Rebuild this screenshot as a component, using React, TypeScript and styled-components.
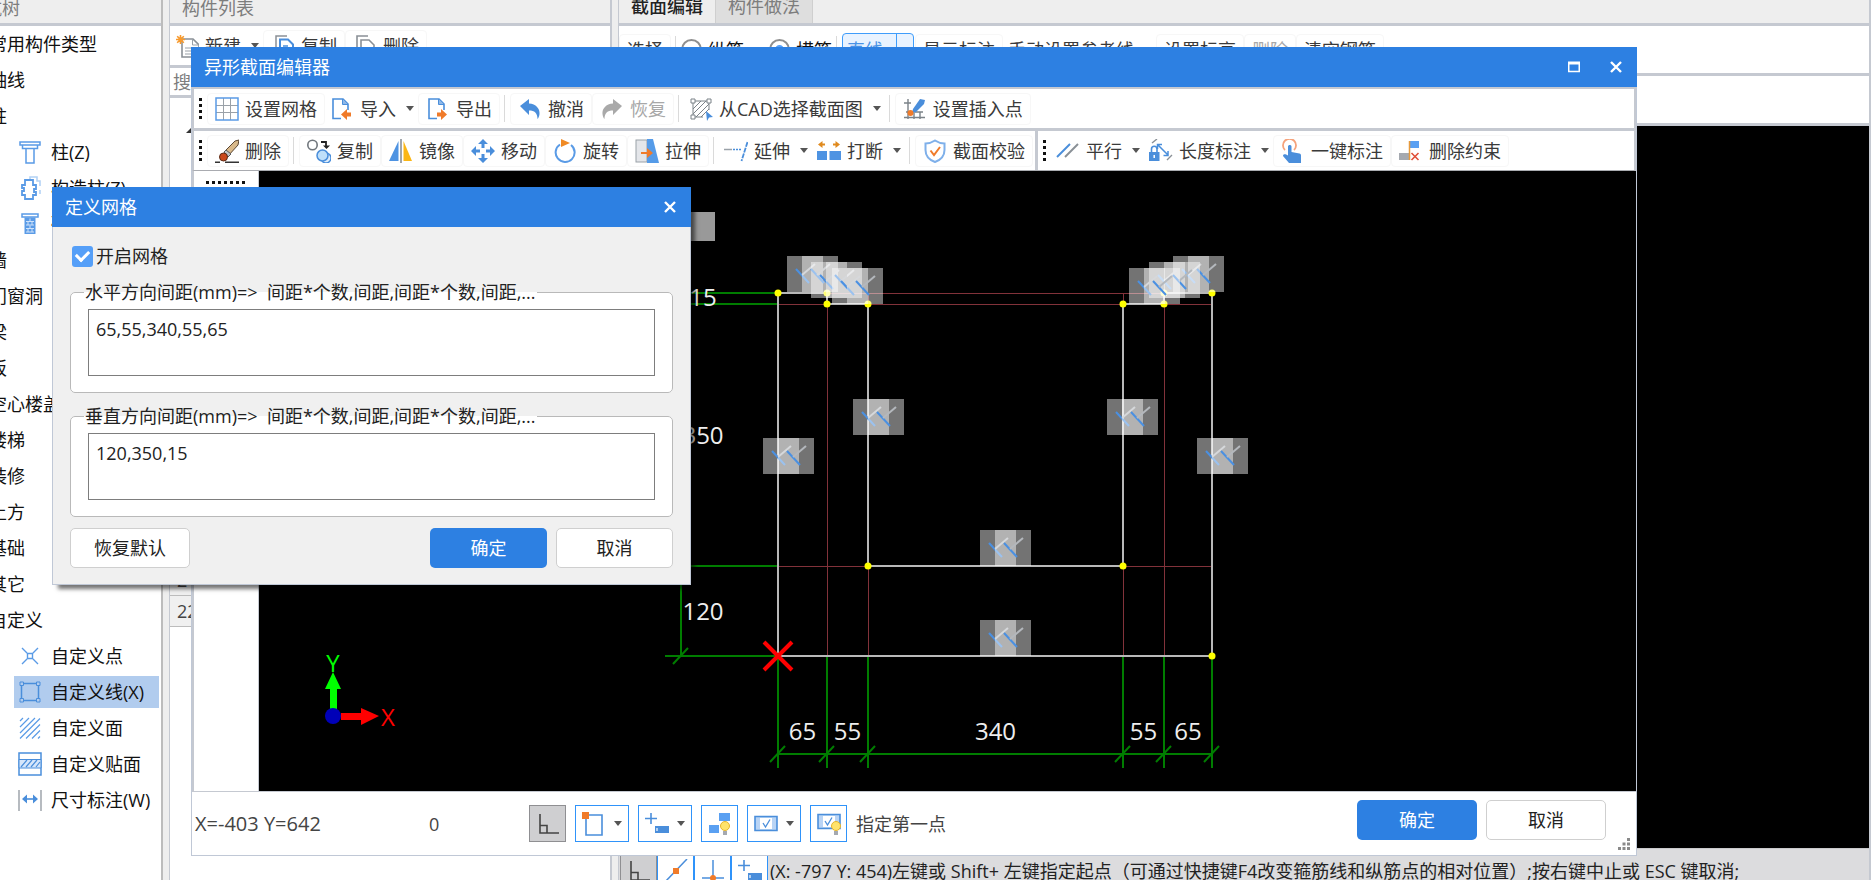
import React from "react";
import styled, { createGlobalStyle, css } from "styled-components";

const GlobalStyle = createGlobalStyle`
  * { box-sizing: border-box; }
  body { margin: 0; }
  body, button, input, textarea {
    font-family: "Open Sans", "Noto Sans CJK SC", sans-serif;
    font-size: 18px;
    line-height: 24px;
    color: #333;
  }
`;

const LINE = "#c5c9d1";
const BLUE = "#2d80e2";

/* ---------- main window ---------- */

const Workspace = styled.div`
  position: relative;
  display: flex;
  gap: 6px;
  height: 100vh;
  overflow: hidden;
  background: #eeeeee;
`;

const Pane = styled.section<{ $width?: number }>`
  display: flex;
  flex-direction: column;
  flex: ${(p) => (p.$width ? `0 0 ${p.$width}px` : "1 1 0")};
  min-width: 0;
  background: #fff;
  border-left: 1px solid ${LINE};
  border-right: 2px solid ${LINE};
`;

const NavPane = styled(Pane)`
  border-left: 0;
  border-right-color: #bcbcbc;
`;

const PaneHeader = styled.header`
  display: flex;
  flex: 0 0 26px;
  background: #eeeeee;
  border-bottom: 3px solid ${LINE};
  overflow: hidden;
`;

const PaneTitle = styled.h2`
  margin: -4px 0 0 12px;
  font-size: 18px;
  font-weight: 400;
  line-height: 24px;
  color: #7d7d7d;
  white-space: nowrap;
`;

const NavTitle = styled(PaneTitle)`
  margin-left: -34px;
`;

const NavList = styled.ul`
  display: flex;
  flex-direction: column;
  list-style: none;
  margin: 0 2px 0 -11px;
  padding: 0;
`;

const NavGroup = styled.li`
  height: 36px;
  line-height: 36px;
  white-space: nowrap;
  color: #111;
`;

const NavItem = styled.li<{ $selected?: boolean }>`
  display: flex;
  align-items: center;
  gap: 9px;
  height: 32px;
  margin: 2px 0 2px 25px;
  padding-left: 4px;
  white-space: nowrap;
  color: #111;
  background: ${(p) => (p.$selected ? "#b1ccee" : "transparent")};
`;

const PaneTools = styled.div<{ $height: number }>`
  display: flex;
  align-items: center;
  flex: 0 0 ${(p) => p.$height}px;
  border-bottom: 3px solid ${LINE};
  overflow: hidden;
`;

const SearchBox = styled.input`
  flex: 0 0 30px;
  padding: 0 3px;
  border: 0;
  border-bottom: 3px solid ${LINE};
  outline: 0;
  &::placeholder { color: #7d7d7d; opacity: 1; }
`;

const ComponentTree = styled.div`
  flex: 0 0 467px;
  padding: 16px;
`;

const RowNumber = styled.div`
  flex: 0 0 31px;
  width: 60px;
  padding-left: 7px;
  line-height: 30px;
  background: #f0f0f0;
  border-bottom: 1px solid #bcbcbc;
  border-right: 1px solid #bcbcbc;
  color: #444;
`;

const Tab = styled.button<{ $active?: boolean }>`
  height: 36px;
  margin-top: -13px;
  padding: 2px 12px 0;
  border: 0;
  border-right: 1px solid #cfcfcf;
  background: ${(p) => (p.$active ? "#eeeeee" : "#dedede")};
  color: ${(p) => (p.$active ? "#222" : "#7d7d7d")};
  font-weight: ${(p) => (p.$active ? 500 : 400)};
`;

const RadioLabel = styled.label`
  display: flex;
  align-items: center;
  gap: 6px;
  color: #111;
  & + & { margin-left: 25px; }
`;

const Radio = styled.input.attrs({ type: "radio" })`
  appearance: none;
  width: 21px;
  height: 21px;
  margin: 0;
  border: 2px solid #8f8f8f;
  border-radius: 50%;
  background: #fff;
  &:checked { background: radial-gradient(circle, #559ff8 4px, #fff 5px); }
`;

const LineMode = styled.button`
  display: flex;
  height: 34px;
  width: 72px;
  padding: 0 0 0 4px;
  margin-right: 1px;
  align-items: center;
  gap: 13px;
  border: 1px solid #3f9dfb;
  border-radius: 4px;
  background: #e9f3ff;
  color: #4b93e6;
  white-space: nowrap;
  &::after { content: ""; width: 1px; height: 32px; background: #3f9dfb; }
`;

const BackViewport = styled.div`
  flex: 1;
  min-height: 0;
  background: #000;
`;

const StatusBar = styled.footer`
  display: flex;
  align-items: center;
  flex: 0 0 45px;
  margin-bottom: -13px;
  padding-left: 1px;
  background: #dcdcde;
  border-top: 1px solid #c9c9cb;
  white-space: nowrap;
  color: #222;
`;

const StatusText = styled.span`
  padding-left: 2px;
`;

/* ---------- toolbars ---------- */

const ToolButton = styled.button<{ $split?: boolean }>`
  display: flex;
  align-items: center;
  gap: 6px;
  height: 32px;
  padding: ${(p) => (p.$split ? "0 3px 0 4px" : "0 7px")};
  border: 1px solid ${(p) => (p.$split ? "transparent" : "#f7f7f7")};
  border-radius: 4px;
  background: #fff;
  white-space: nowrap;
  color: #3a3a3a;
  &:disabled { color: #a8a8a8; }
`;

const Caret = styled.span`
  margin-left: 4px;
  border: 4px solid transparent;
  border-top: 5px solid #555;
  border-bottom: 0;
`;

const ToolDivider = styled.span`
  flex: 0 0 1px;
  height: 27px;
  margin: 0 5px 0 4px;
  background: #dadada;
`;

const Grip = styled.span<{ $across?: boolean }>`
  ${(p) =>
    p.$across
      ? css`width: 40px; height: 3px; margin: 10px 0 0 12px;
          background: repeating-linear-gradient(90deg, #111 0 3px, transparent 3px 6px);`
      : css`width: 3px; height: 21px; margin-right: 5px;
          background: repeating-linear-gradient(#111 0 3px, transparent 3px 6px);`}
`;

/* ---------- dialogs ---------- */

const EditorDialog = styled.section`
  position: absolute;
  inset: 47px 234px 24px 191px;
  display: flex;
  flex-direction: column;
`;

const GridDialog = styled.section`
  position: absolute;
  top: 187px;
  left: 52px;
  width: 639px;
  box-shadow: 5px 5px 4px -1px rgba(0, 0, 0, 0.55);
`;

const TitleBar = styled.header`
  display: flex;
  align-items: center;
  flex: 0 0 40px;
  height: 40px;
  padding-left: 13px;
  background: ${BLUE};
`;

const TitleText = styled.h1`
  flex: 1;
  margin: 0;
  font-size: 18px;
  font-weight: 400;
  line-height: 24px;
  color: #fff;
`;

const WindowButton = styled.button`
  display: grid;
  place-items: center;
  width: 42px;
  height: 40px;
  padding: 0;
  border: 0;
  background: transparent;
`;

const EditorBody = styled.div`
  display: flex;
  flex-direction: column;
  flex: 1;
  min-height: 0;
  background: #fff;
  border: 1px solid #c0c8d6;
  border-top: 2px solid ${LINE};
`;

const ToolRow = styled.div<{ $last?: boolean }>`
  display: flex;
  align-items: center;
  flex: 0 0 ${(p) => (p.$last ? 40 : 42)}px;
  border: 2px solid ${LINE};
  border-top: 0;
  border-bottom: ${(p) => (p.$last ? "1px solid #a9abb0" : `3px solid ${LINE}`)};
`;

const ToolGroup = styled.div<{ $joined?: boolean }>`
  display: flex;
  align-items: center;
  height: 100%;
  padding-left: 5px;
  ${(p) => p.$joined && css`margin-left: 2px; border-left: 3px solid ${LINE};`}
`;

const EditorMain = styled.div`
  display: flex;
  flex: 1;
  min-height: 0;
  border-bottom: 1px solid ${LINE};
`;

const SideStrip = styled.div`
  display: flex;
  flex: 0 0 67px;
  border-left: 2px solid ${LINE};
  border-right: 1px solid ${LINE};
`;

const Drawing = styled.svg`
  flex: 1;
  min-width: 0;
  height: 100%;
  background: #000;
`;

const EditorFooter = styled.footer`
  display: flex;
  align-items: center;
  flex: 0 0 63px;
  padding-left: 3px;
  color: #444;
`;

const Coordinates = styled.span`
  width: 234px;
  font-size: 20px;
`;

const Angle = styled.span`
  width: 100px;
`;

const SnapTools = styled.div`
  display: flex;
  align-items: center;
  gap: 9px;
  flex: 1;
`;

const SnapButton = styled.button<{ $wide?: boolean; $pressed?: boolean }>`
  display: flex;
  align-items: center;
  justify-content: center;
  gap: 4px;
  width: ${(p) => (p.$wide ? 54 : 37)}px;
  height: 37px;
  padding: 0;
  border: 1px solid ${(p) => (p.$pressed ? "#8f8f92" : "#2f93fa")};
  background: ${(p) => (p.$pressed ? "#cfcfd1" : "#fff")};
`;

const PushButton = styled.button<{ $primary?: boolean }>`
  width: 120px;
  height: 40px;
  padding: 0;
  border: ${(p) => (p.$primary ? "0" : "1px solid #cfcfcf")};
  border-radius: 5px;
  background: ${(p) => (p.$primary ? BLUE : "#fff")};
  color: ${(p) => (p.$primary ? "#fff" : "#222")};
`;

const DialogActions = styled.div`
  display: flex;
  align-items: center;
  gap: 9px;
  padding: 0 12px 8px 0;
`;

const SizeGrip = styled.svg`
  align-self: flex-end;
  margin: 0 6px 5px 0;
`;

const GridBody = styled.form`
  display: flex;
  flex-direction: column;
  gap: 11px;
  padding: 16px 17px;
  background: #f0f0f0;
  border: 1px solid #c0c8d6;
  border-top: 0;
`;

const CheckLabel = styled.label`
  display: flex;
  align-items: center;
  gap: 3px;
  height: 26px;
  color: #222;
`;

const CheckBox = styled.input.attrs({ type: "checkbox" })`
  appearance: none;
  display: grid;
  place-items: center;
  width: 21px;
  height: 21px;
  margin: 0 0 0 2px;
  border-radius: 3px;
  background: #559ff8;
  &::after {
    content: "";
    width: 6px;
    height: 10px;
    margin-bottom: 3px;
    border: solid #fff;
    border-width: 0 3px 3px 0;
    transform: rotate(45deg);
  }
`;

const SpacingGroup = styled.fieldset`
  min-width: 0;
  margin: 0;
  padding: 5px 17px 16px;
  border: 1px solid #b9b9b9;
  border-radius: 5px;
  background: #fff;
`;

const SpacingLegend = styled.legend`
  margin-left: -4px;
  padding: 0 1px;
  line-height: 24px;
  white-space: pre;
  color: #222;
`;

const SpacingInput = styled.textarea`
  display: block;
  width: 100%;
  height: 67px;
  padding: 7px;
  border: 1px solid #7d7d7d;
  outline: 0;
  resize: none;
  color: #222;
`;

const ActionRow = styled.div`
  display: flex;
  gap: 9px;
  & > :first-child { margin-right: auto; }
  & > :not(:first-child) { width: 117px; }
`;

/* ---------- icons ---------- */

const C = "#4a8edb";
const G = "#9aa1a8";
const O = "#f07b2a";

const art: Record<string, React.ReactNode> = {
  grid: (
    <>
      <path d="M8.5 1v22M15.5 1v22M1 8.5h22M1 15.5h22" stroke={G} />
      <rect x="1" y="1" width="22" height="22" stroke="#5a9be6" strokeWidth="1.500" />
    </>
  ),
  importFile: (
    <>
      <path d="M11 21.5H3V2h10l5 5v6" stroke={C} strokeWidth="1.6" />
      <path d="M12.500 2v5.500H18" fill="#8fb8e8" stroke={C} />
      <path d="M11 17.500l6-5.500v3.500h4v4h-4V23z" fill={O} />
    </>
  ),
  exportFile: (
    <>
      <path d="M11 21.500H3V2h10l5 5v6" stroke={C} strokeWidth="1.6" />
      <path d="M12.500 2v5.500H18" fill="#8fb8e8" stroke={C} />
      <path d="M21 17.500l-6-5.500v3.500h-4v4h4V23z" fill={O} />
    </>
  ),
  undo: <path d="M2 9l9-7v4.500c7 .5 11 5 10.500 10.500-.3 2.500-1 4-2 5 0-6-3-8.500-8.500-8.500V18z" fill={C} />,
  redo: <path d="M22 9l-9-7v4.500C6 7 2 11.500 2.500 17c.3 2.500 1 4 2 5 0-6 3-8.500 8.500-8.500V18z" fill="#a9a9a9" />,
  cad: (
    <>
      <path d="M4 12l8-8M4 17L17 4M7 20L20 7M12 20l8-8M4 4h16v9M4 4v16h10" stroke="#7b8288" />
      <path d="M2 2h4v4H2zM18 2h4v4h-4zM2 18h4v4H2z" fill="#fff" stroke="#7b8288" />
      <path d="M17 14l7 6-4 .5L18 24z" fill={C} />
    </>
  ),
  insertPoint: (
    <>
      <path d="M5 2v20M11 14v8M17 15v7M1 6h7M1 20.500h21M12 15h8M3 15h4" stroke="#7b8288" strokeWidth="1.400" />
      <path d="M17 2l5 1-1 4-8 8-4 1 1-4z" fill={C} />
      <circle cx="7.500" cy="16" r="3" fill={O} />
    </>
  ),
  eraser: (
    <>
      <path d="M9 13L20 2l4-1-1 5-10 11z" fill="#d9b98a" stroke="#5b4632" />
      <path d="M9 13l2-2 5 4-3 3z" fill="#bfc3c7" stroke="#5b5b5b" />
      <circle cx="8.500" cy="18" r="4" fill="#c9481c" stroke="#5b2b16" />
      <path d="M0 23.300h5M10 23.300h14" stroke="#333" strokeWidth="1.400" />
    </>
  ),
  copyShape: (
    <>
      <circle cx="5.500" cy="6" r="4.700" fill="#fff" stroke="#70767c" strokeWidth="1.600" />
      <path d="M14 3h5v4" stroke="#222" strokeWidth="1.800" />
      <path d="M16 6.500h7L19.500 10z" fill="#222" />
      <circle cx="19" cy="19" r="5" fill="#dcecfb" stroke={C} strokeWidth="1.500" />
      <circle cx="15.500" cy="16.500" r="5.500" fill="#bfe0fa" stroke={C} strokeWidth="1.500" />
    </>
  ),
  mirror: (
    <>
      <path d="M9.500 2v20H0z" fill="#4e93e2" />
      <path d="M14.500 2v20H23z" fill="#fbb615" />
      <path d="M12 0v24" stroke="#8a9096" strokeWidth="1.600" />
    </>
  ),
  move: (
    <path
      d="M12 0l5 5h-3.500v4h-3V5H7zM12 24l-5-5h3.500v-4h3v4H17zM0 12l5-5v3.500h4v3H5V17zM24 12l-5 5v-3.500h-4v-3h4V7z"
      fill={C}
    />
  ),
  rotate: (
    <>
      <path d="M7 5.500a9.500 9.500 0 1 0 11 .5" stroke="#5a9be6" strokeWidth="2" />
      <path d="M8 0l9 4-9 4z" fill="#f08a24" />
    </>
  ),
  stretch: (
    <>
      <rect x="1" y="1" width="11" height="22" fill="#e4e6ea" stroke={G} />
      <path d="M12 0h6l6 24H12z" fill="#559be8" />
      <path d="M6 14h8" stroke={O} strokeWidth="2" />
      <path d="M12 9l6 5-6 5z" fill={O} />
    </>
  ),
  extend: (
    <>
      <path d="M0 10.500h8" stroke={G} strokeWidth="1.500" />
      <path d="M9 10.500h9" stroke={C} strokeWidth="1.500" strokeDasharray="2 1" />
      <path d="M23.500 3l-6 19" stroke={C} strokeWidth="1.800" strokeDasharray="5 1" />
    </>
  ),
  breakLine: (
    <>
      <path d="M0 12h10v9H0zM12.500 12H24v9H12.500z" fill="#4e93e2" />
      <path d="M1 5.500L5.500 2v2.500H8v2H5.500V9zM23 5.500L18.500 2v2.500H16v2h2.500V9z" fill="#e08a1e" />
    </>
  ),
  shield: (
    <>
      <path d="M12 1.500c3 2 6 3 9.500 3V11c0 6-4 10-9.500 12C6.500 21 2.500 17 2.500 11V4.500c3.500 0 6.500-1 9.500-3z" stroke="#7fb0ea" strokeWidth="2" />
      <path d="M7.500 11.500l3.500 4.500 6-8" stroke={O} strokeWidth="2" />
    </>
  ),
  parallel: (
    <>
      <path d="M1 18L14 5" stroke={C} strokeWidth="2" />
      <path d="M9 18L22 5" stroke="#8a9096" strokeWidth="2" />
    </>
  ),
  lengthDim: (
    <>
      <rect x="0" y="13" width="10.500" height="9" fill={C} />
      <path d="M5.200 16v3" stroke="#fff" strokeWidth="1.500" />
      <path d="M2.500 13v-3a2.700 2.700 0 0 1 5.500 0v3" stroke={C} strokeWidth="1.600" />
      <path d="M3 4l5-4M18 21l5-5" stroke="#8a9096" strokeWidth="1.400" />
      <path d="M9 6l10 10M8.500 10V5.500H13M19 12v4.500h-4.500" stroke={C} strokeWidth="1.500" />
    </>
  ),
  tap: (
    <>
      <path d="M4 11a6.500 6.500 0 1 1 9 0" stroke="#f5a37c" strokeWidth="1.800" />
      <path d="M7 7.500c0-2 3.500-2 3.500 0V13l8 1.500c1 .3 1.500 1 1.500 2V24H8l-6-7c0-2 2-2.500 5-.5z" fill={C} />
    </>
  ),
  removeConstraint: (
    <>
      <path d="M0 14h10v7H0z" fill="#a5a9b0" />
      <path d="M11 2h9v7h-9z" fill="#5aa0f2" />
      <path d="M10.500 2v19" stroke="#e79a3c" strokeWidth="1.500" />
      <path d="M12.500 14l7 7M19.500 14l-7 7" stroke="#e05038" strokeWidth="1.600" />
    </>
  ),
  newFile: (
    <>
      <path d="M7 5h11l6 6v12H7z" fill="#fff" stroke="#8a9096" strokeWidth="1.600" />
      <path d="M17.500 5v6H24M10 14h10M10 17h10M10 20h10" stroke={G} />
      <path d="M5.500 1v9M1 5.500h9M2.200 2.200l6.600 6.600M8.800 2.200L2.200 8.800" stroke="#f79a2e" strokeWidth="1.600" />
    </>
  ),
  copyFile: (
    <>
      <path d="M5 20V2h11" stroke="#8a9096" strokeWidth="1.500" />
      <path d="M9 5.500h8l5 5V23H9z" fill="#fff" stroke={C} strokeWidth="2" />
      <path d="M12 12h5M12 15h7" stroke={C} strokeWidth="1.600" />
    </>
  ),
  removeFile: (
    <>
      <path d="M4 20V2h11M8 22V6h8l5 5v3" stroke="#8a9096" strokeWidth="1.600" />
      <path d="M13 13h10v3H13z" fill="#e05048" />
    </>
  ),
  column: (
    <path d="M2 2h20v3H2zM4.500 5v3.500h15V5M8 8.500V23h8V8.500" fill="#fff" stroke="#5a9be6" strokeWidth="1.500" />
  ),
  structColumn: (
    <>
      <path d="M12 4V1h7v4h3v5M22 14v4" stroke="#b3d2f5" strokeWidth="1.600" />
      <path d="M7 4h8v5h3v4h-2v3h2v3h-3v4H7v-4H4v-4h2v-3H4V9h3z" fill="#fff" stroke="#5a9be6" strokeWidth="1.800" />
    </>
  ),
  brickColumn: (
    <>
      <path d="M4 2h16v3H4z" fill="#fff" stroke="#5a9be6" strokeWidth="1.500" />
      <path d="M6.500 5.500h11V22h-11z" fill="#5a9be6" />
      <path d="M8 9.500h8M8 13h8M8 16.500h8M8 20h8M12 6.500v3M10 10v3M14 10v3M12 13.500v3M10 17v3M14 17v3" stroke="#cfe2fa" />
    </>
  ),
  customPoint: (
    <path d="M4 4l5 5M20 4l-5 5M4 20l5-5M20 20l-5-5M9.500 9.500h5v5h-5z" stroke="#5a9be6" strokeWidth="1.400" />
  ),
  customLine: (
    <>
      <path d="M3.500 3.500h17v17h-17z" stroke={C} strokeWidth="1.500" />
      <path d="M2 2h3.500v3.500H2zM18.500 2H22v3.500h-3.500zM2 18.500h3.500V22H2zM18.500 18.500H22V22h-3.500z" fill="#b1ccee" stroke={C} />
    </>
  ),
  customFace: (
    <path d="M2 5l3-3M2 11l9-9M2 17L17 2M2 22.500L22 2.500M8 22.500L22 8.500M14 22.500l8-8M20 22.500l2-2" stroke="#5a9be6" strokeWidth="1.200" />
  ),
  customVeneer: (
    <>
      <rect x="1" y="1" width="22" height="22" stroke={C} strokeWidth="1.500" />
      <path d="M1 7.500h22v8.500H1z" fill="#d6e6fa" stroke={C} />
      <path d="M3 15l6-7M8 15l6-7M13 15l6-7M18 15l4-5" stroke={C} strokeWidth="1.200" />
    </>
  ),
  dimension: (
    <>
      <path d="M1 2v21M23 2v21" stroke="#a5abb1" strokeWidth="1.600" />
      <path d="M6 11h12" stroke={C} strokeWidth="1.600" />
      <path d="M4 11l5-4.500v9zM20 11l-5-4.500v9z" fill={C} />
    </>
  ),
  ortho: <path d="M4 2v19h19M4 13.500h7V21" stroke="#444" strokeWidth="1.600" />,
  frameSnap: (
    <>
      <path d="M4 3h16v20H4z" stroke={C} strokeWidth="1.600" />
      <path d="M0 0h7v7H0z" fill={O} />
    </>
  ),
  plusInput: (
    <>
      <path d="M6 1v11M0 6.500h12" stroke={C} strokeWidth="1.600" />
      <path d="M10 14h14v7H10z" fill={C} />
      <path d="M12 16v3" stroke="#fff" strokeWidth="1.200" />
    </>
  ),
  lampBlocks: (
    <>
      <path d="M11 1h11v8H11zM1 13h10v8H1z" fill="#5aa0f2" />
      <Bulb x={17} y={11} />
    </>
  ),
  checkPanel: (
    <>
      <path d="M1 4.500h22v14H1z" fill="#b9d4f5" stroke={C} strokeWidth="1.600" />
      <path d="M6 6h12v11H6z" fill="#fff" />
      <path d="M9 11l2.500 4L16 7.500" stroke={C} strokeWidth="1.300" />
    </>
  ),
  checkLamp: (
    <>
      <path d="M1 2.500h22v14H1z" fill="#b9d4f5" stroke={C} strokeWidth="1.600" />
      <path d="M6 4h12v11H6z" fill="#fff" />
      <path d="M8 9l2.500 4L15 5.500" stroke={C} strokeWidth="1.300" />
      <Bulb x={19} y={11} />
    </>
  ),
  midSnap: (
    <>
      <path d="M1 23L23 0" stroke={C} strokeWidth="1.500" />
      <path d="M9 9h6v6H9z" fill={O} />
    </>
  ),
  perpSnap: (
    <>
      <path d="M12 1v20M1 19h22" stroke={C} strokeWidth="1.500" />
      <circle cx="12" cy="19" r="3" fill={O} />
    </>
  ),
};

function Bulb({ x, y }: { x: number; y: number }) {
  return (
    <>
      <circle cx={x} cy={y + 3} r="4.500" fill="#ffe36b" stroke="#e6b52c" />
      <path d={`M${x - 2} ${y + 8}h4v4h-4z`} fill="#a5a9b0" />
    </>
  );
}

function Icon({ name }: { name: string }) {
  return (
    <svg width="24" height="24" viewBox="0 0 24 24" fill="none" aria-hidden="true">
      {art[name]}
    </svg>
  );
}

function Tool(p: { icon?: string; label: string; split?: boolean; disabled?: boolean }) {
  return (
    <ToolButton type="button" $split={p.split} disabled={p.disabled}>
      {p.icon && <Icon name={p.icon} />}
      {p.label}
      {p.split && <Caret />}
    </ToolButton>
  );
}

function CloseIcon() {
  return (
    <svg width="12" height="12" viewBox="0 0 12 12" aria-hidden="true">
      <path d="M1 1l10 10M11 1L1 11" stroke="#fff" strokeWidth="2.400" />
    </svg>
  );
}

/* ---------- section drawing ---------- */

const columnsX = [519, 568, 609, 864, 905, 953];
const rowsY = [485, 395, 133, 122];
const spansX = ["65", "55", "340", "55", "65"];
const spansY: [string, number][] = [["120", 449], ["350", 273], ["15", 135]];
const outline: [number, number][] = [
  [519, 122], [568, 122], [568, 133], [609, 133], [609, 395], [864, 395],
  [864, 133], [905, 133], [905, 122], [953, 122], [953, 485], [519, 485],
];
const constraints: [number, number][] = [
  [528, 85], [552, 91], [573, 97], [914, 85], [890, 91], [870, 97],
  [594, 228], [848, 228], [504, 267], [938, 267], [721, 359], [721, 449],
];

function Constraint({ x, y }: { x: number; y: number }) {
  return (
    <g transform={`translate(${x} ${y})`}>
      {[0, 15].map((dx) => (
        <g key={dx}>
          <rect x={dx} width="36" height="36" fill="#fff" fillOpacity="0.45" />
          <path d={`M${dx + 9} 13l13 14`} stroke="#4a90e2" strokeWidth="2" />
          <path d={`M${dx + 28} 8L${dx + 15} 19`} stroke="#b4b8bd" strokeWidth="2" />
        </g>
      ))}
    </g>
  );
}

function SectionDrawing() {
  return (
    <Drawing role="img" aria-label="异形截面">
      <g stroke="#82323a" shapeRendering="crispEdges">
        {columnsX.slice(1, 5).map((x) => <line key={x} x1={x} x2={x} y1="122" y2="485" />)}
        {rowsY.slice(1).map((y) => <line key={y} x1="519" x2="953" y1={y} y2={y} />)}
      </g>
      <g stroke="#007d00" strokeWidth="2">
        {columnsX.map((x) => <path key={x} d={`M${x} 485V597M${x - 8} 591l15-16`} />)}
        {rowsY.map((y) => <path key={y} d={`M406 ${y}H519M414 ${y + 8}l15-16`} />)}
        <path d="M519 583H953M422 122V485" />
      </g>
      <rect x="405" y="41" width="51" height="29" fill="#999" />
      <polygon points={outline.map((p) => p.join()).join(" ")} fill="none" stroke="#b8b8b8" strokeWidth="2" />
      {outline.slice(0, 11).map(([x, y]) => <circle key={`${x}-${y}`} cx={x} cy={y} r="3.500" fill="#ff0" />)}
      {constraints.map(([x, y]) => <Constraint key={`${x}-${y}`} x={x} y={y} />)}
      <path d="M505 471l28 28M533 471l-28 28" stroke="#f00" strokeWidth="4" />
      <g fill="#eee" fontSize="24" textAnchor="middle">
        {spansX.map((t, i) => <text key={i} x={(columnsX[i] + columnsX[i + 1]) / 2} y="569">{t}</text>)}
        {spansY.map(([t, y]) => <text key={t} x="444" y={y}>{t}</text>)}
      </g>
      <path d="M71 538V518H66L74 501L82 518H78V538z" fill="#0f0" />
      <path d="M82 542H102V537L120 545L102 554V549H82z" fill="#f00" />
      <circle cx="74" cy="545" r="8" fill="#0000b8" />
      <g fontSize="24" textAnchor="middle">
        <text x="74" y="501" fill="#0f0">Y</text>
        <text x="129" y="555" fill="#f00">X</text>
      </g>
    </Drawing>
  );
}

/* ---------- page ---------- */

const navigation: [string, string?][] = [
  ["常用构件类型"], ["轴线"], ["柱"],
  ["柱(Z)", "column"], ["构造柱(Z)", "structColumn"], ["砌体柱(Z)", "brickColumn"],
  ["墙"], ["门窗洞"], ["梁"], ["板"], ["空心楼盖"], ["楼梯"], ["装修"], ["土方"], ["基础"], ["其它"], ["自定义"],
  ["自定义点", "customPoint"], ["自定义线(X)", "customLine"], ["自定义面", "customFace"],
  ["自定义贴面", "customVeneer"], ["尺寸标注(W)", "dimension"],
];

export default function App() {
  return (
    <Workspace>
      <GlobalStyle />
      <NavPane $width={163}>
        <PaneHeader><NavTitle>导航树</NavTitle></PaneHeader>
        <NavList>
          {navigation.map(([label, icon]) =>
            icon ? (
              <NavItem key={label} $selected={label === "自定义线(X)"}>
                <Icon name={icon} />
                {label}
              </NavItem>
            ) : (
              <NavGroup key={label}>{label}</NavGroup>
            )
          )}
        </NavList>
      </NavPane>

      <Pane $width={443}>
        <PaneHeader><PaneTitle>构件列表</PaneTitle></PaneHeader>
        <PaneTools $height={42}>
          <Tool icon="newFile" label="新建" split />
          <Tool icon="copyFile" label="复制" />
          <Tool icon="removeFile" label="删除" />
        </PaneTools>
        <SearchBox aria-label="搜索构件" placeholder="搜索构件..." />
        <ComponentTree>
          <svg width="8" height="8" viewBox="0 0 8 8" aria-hidden="true">
            <path d="M8 0v8H0z" fill="#333" />
          </svg>
        </ComponentTree>
        <RowNumber>21</RowNumber>
        <RowNumber>22</RowNumber>
      </Pane>

      <Pane>
        <PaneHeader>
          <Tab type="button" $active>截面编辑</Tab>
          <Tab type="button">构件做法</Tab>
        </PaneHeader>
        <PaneTools $height={50}>
          <Tool label="选择" />
          <ToolDivider />
          <RadioLabel><Radio name="rebar" />纵筋</RadioLabel>
          <RadioLabel><Radio name="rebar" defaultChecked />横筋</RadioLabel>
          <ToolDivider />
          <LineMode type="button">直线</LineMode>
          <Tool label="显示标注" />
          <Tool label="手动设置参考线" split />
          <Tool label="设置标高" />
          <Tool label="删除" disabled />
          <Tool label="清空钢筋" />
        </PaneTools>
        <PaneTools $height={50} />
        <BackViewport />
        <StatusBar>
          <SnapButton type="button" aria-label="正交" $pressed><Icon name="ortho" /></SnapButton>
          <SnapButton type="button" aria-label="中点"><Icon name="midSnap" /></SnapButton>
          <SnapButton type="button" aria-label="垂点"><Icon name="perpSnap" /></SnapButton>
          <SnapButton type="button" aria-label="动态输入"><Icon name="plusInput" /></SnapButton>
          <StatusText>(X: -797 Y: 454)左键或 Shift+ 左键指定起点（可通过快捷键F4改变箍筋线和纵筋点的相对位置）;按右键中止或 ESC 键取消;</StatusText>
        </StatusBar>
      </Pane>

      <EditorDialog role="dialog" aria-labelledby="editor-title">
        <TitleBar>
          <TitleText id="editor-title">异形截面编辑器</TitleText>
          <WindowButton type="button" aria-label="最大化">
            <svg width="12" height="12" viewBox="0 0 12 12" aria-hidden="true">
              <path d="M.75 2v8.500h10.500V2" fill="none" stroke="#fff" strokeWidth="1.500" />
              <path d="M0 2h12" stroke="#fff" strokeWidth="3" />
            </svg>
          </WindowButton>
          <WindowButton type="button" aria-label="关闭"><CloseIcon /></WindowButton>
        </TitleBar>
        <EditorBody>
          <ToolRow>
            <ToolGroup>
              <Grip />
              <Tool icon="grid" label="设置网格" />
              <Tool icon="importFile" label="导入" split />
              <Tool icon="exportFile" label="导出" />
              <ToolDivider />
              <Tool icon="undo" label="撤消" />
              <Tool icon="redo" label="恢复" disabled />
              <ToolDivider />
              <Tool icon="cad" label="从CAD选择截面图" split />
              <ToolDivider />
              <Tool icon="insertPoint" label="设置插入点" />
            </ToolGroup>
          </ToolRow>
          <ToolRow $last>
            <ToolGroup>
              <Grip />
              <Tool icon="eraser" label="删除" />
              <ToolDivider />
              <Tool icon="copyShape" label="复制" />
              <Tool icon="mirror" label="镜像" />
              <Tool icon="move" label="移动" />
              <Tool icon="rotate" label="旋转" />
              <Tool icon="stretch" label="拉伸" />
              <ToolDivider />
              <Tool icon="extend" label="延伸" split />
              <Tool icon="breakLine" label="打断" split />
              <ToolDivider />
              <Tool icon="shield" label="截面校验" />
            </ToolGroup>
            <ToolGroup $joined>
              <Grip />
              <Tool icon="parallel" label="平行" split />
              <Tool icon="lengthDim" label="长度标注" split />
              <Tool icon="tap" label="一键标注" />
              <Tool icon="removeConstraint" label="删除约束" />
            </ToolGroup>
          </ToolRow>
          <EditorMain>
            <SideStrip><Grip $across /></SideStrip>
            <SectionDrawing />
          </EditorMain>
          <EditorFooter>
            <Coordinates>X=-403 Y=642</Coordinates>
            <Angle>0</Angle>
            <SnapTools>
              <SnapButton type="button" aria-label="正交" $pressed><Icon name="ortho" /></SnapButton>
              <SnapButton type="button" aria-label="捕捉" $wide><Icon name="frameSnap" /><Caret /></SnapButton>
              <SnapButton type="button" aria-label="动态输入" $wide><Icon name="plusInput" /><Caret /></SnapButton>
              <SnapButton type="button" aria-label="显示图元"><Icon name="lampBlocks" /></SnapButton>
              <SnapButton type="button" aria-label="约束" $wide><Icon name="checkPanel" /><Caret /></SnapButton>
              <SnapButton type="button" aria-label="显示约束"><Icon name="checkLamp" /></SnapButton>
              <span>指定第一点</span>
            </SnapTools>
            <DialogActions>
              <PushButton type="button" $primary>确定</PushButton>
              <PushButton type="button">取消</PushButton>
            </DialogActions>
            <SizeGrip width="12" height="12" viewBox="0 0 12 12" aria-hidden="true">
              <path d="M9 0h3v3H9zM9 4.500h3v3H9zM9 9h3v3H9zM4.500 4.500h3v3h-3zM4.500 9h3v3h-3zM0 9h3v3H0z" fill="#8a8a8a" />
            </SizeGrip>
          </EditorFooter>
        </EditorBody>
      </EditorDialog>

      <GridDialog role="dialog" aria-labelledby="grid-title">
        <TitleBar>
          <TitleText id="grid-title">定义网格</TitleText>
          <WindowButton type="button" aria-label="关闭"><CloseIcon /></WindowButton>
        </TitleBar>
        <GridBody onSubmit={(e) => e.preventDefault()}>
          <CheckLabel><CheckBox defaultChecked />开启网格</CheckLabel>
          <SpacingGroup>
            <SpacingLegend id="spacing-x">{"水平方向间距(mm)=>  间距*个数,间距,间距*个数,间距,..."}</SpacingLegend>
            <SpacingInput aria-labelledby="spacing-x" defaultValue="65,55,340,55,65" />
          </SpacingGroup>
          <SpacingGroup>
            <SpacingLegend id="spacing-y">{"垂直方向间距(mm)=>  间距*个数,间距,间距*个数,间距,..."}</SpacingLegend>
            <SpacingInput aria-labelledby="spacing-y" defaultValue="120,350,15" />
          </SpacingGroup>
          <ActionRow>
            <PushButton type="button">恢复默认</PushButton>
            <PushButton type="submit" $primary>确定</PushButton>
            <PushButton type="button">取消</PushButton>
          </ActionRow>
        </GridBody>
      </GridDialog>
    </Workspace>
  );
}
